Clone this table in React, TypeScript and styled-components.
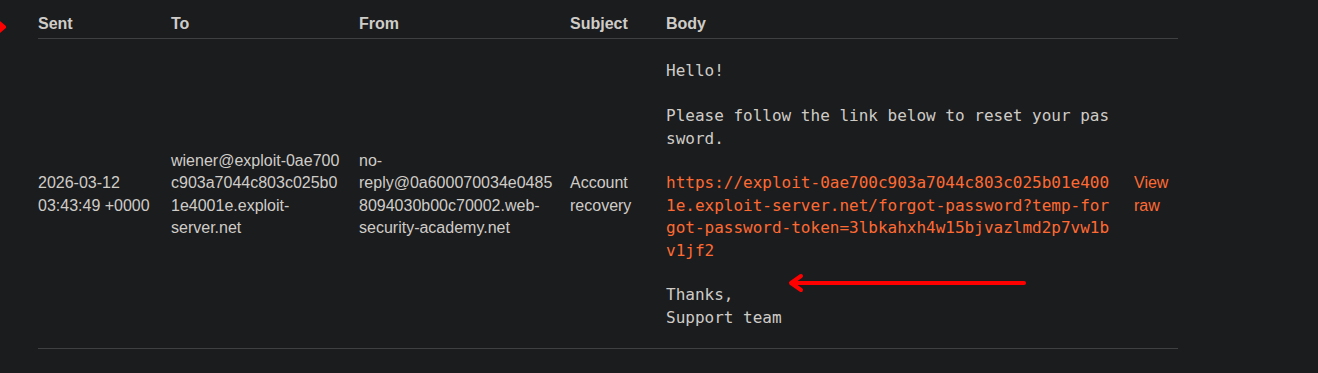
import styled, { createGlobalStyle } from "styled-components";

const textColor = "#cfccc8";
const linkColor = "#ff6a33";
const lineColor = "#3f4042";

const GlobalStyle = createGlobalStyle`
  html, body {
    margin: 0;
    padding: 0;
    background: #1b1c1e;
  }
  body {
    font-family: "Liberation Sans", Arial, sans-serif;
    font-size: 16px;
    color: ${textColor};
  }
`;

const Page = styled.div`
  position: relative;
  min-height: 373px;
  padding-left: 38px;
`;

const Table = styled.table`
  width: 1140px;
  table-layout: fixed;
  border-collapse: collapse;
  border-spacing: 0;
`;

const HeadCell = styled.th`
  padding: 13px 16px 3px 0;
  text-align: left;
  font-weight: 700;
  line-height: 1.4;
  border-bottom: 1px solid ${lineColor};
`;

const Cell = styled.td<{ $padRight?: number }>`
  padding: 21px ${({ $padRight = 16 }) => $padRight}px 19px 0;
  vertical-align: middle;
  line-height: 1.4;
  overflow-wrap: anywhere;
  border-bottom: 1px solid ${lineColor};
`;

const Body = styled.pre`
  margin: 0;
  font-family: "DejaVu Sans Mono", "Liberation Mono", monospace;
  font-size: 16px;
  line-height: 1.4;
  white-space: pre-wrap;
  word-break: break-all;
  color: ${textColor};
`;

const Link = styled.a`
  color: ${linkColor};
  text-decoration: none;
`;

const Overlay = styled.svg`
  position: absolute;
  inset: 0;
  width: 1318px;
  height: 373px;
  pointer-events: none;
`;

const columns = [133, 188, 211, 96, 468, 44];

// word joiner after the hyphen keeps "exploit-0ae700…" together, as in the reference
const recipient =
  "wiener@exploit-\u20600ae700c903a7044c803c025b01e4001e.exploit-server.net";
const sender = "no-reply@0a600070034e04858094030b00c70002.web-security-academy.net";
const resetUrl =
  "https://exploit-0ae700c903a7044c803c025b01e4001e.exploit-server.net/forgot-password?temp-forgot-password-token=3lbkahxh4w15bjvazlmd2p7vw1bv1jf2";

export default function App() {
  return (
    <Page>
      <GlobalStyle />
      <Table>
        <colgroup>
          {columns.map((w, i) => (
            <col key={i} style={{ width: w }} />
          ))}
        </colgroup>
        <thead>
          <tr>
            <HeadCell>Sent</HeadCell>
            <HeadCell>To</HeadCell>
            <HeadCell>From</HeadCell>
            <HeadCell>Subject</HeadCell>
            <HeadCell>Body</HeadCell>
            <HeadCell />
          </tr>
        </thead>
        <tbody>
          <tr>
            <Cell>2026-03-12 03:43:49 +0000</Cell>
            <Cell>{recipient}</Cell>
            <Cell>{sender}</Cell>
            <Cell>Account recovery</Cell>
            <Cell $padRight={17}>
              <Body>
                {"Hello!\n\nPlease follow the link below to reset your password.\n\n"}
                <Link href="#">{resetUrl}</Link>
                {"\n\nThanks,\nSupport team"}
              </Body>
            </Cell>
            <Cell $padRight={0}>
              <Link href="#">View raw</Link>
            </Cell>
          </tr>
        </tbody>
      </Table>
      <Overlay viewBox="0 0 1318 373">
        <g stroke="#ff0000" strokeWidth={4} strokeLinecap="round" strokeLinejoin="round" fill="none">
          <line x1={1024} y1={283} x2={792} y2={283} />
          <polyline points="801,276 791,283 801,290" />
          <line x1={-10} y1={27} x2={3} y2={27} />
          <polyline points="-3,21 4,27 -3,33" />
        </g>
      </Overlay>
    </Page>
  );
}
